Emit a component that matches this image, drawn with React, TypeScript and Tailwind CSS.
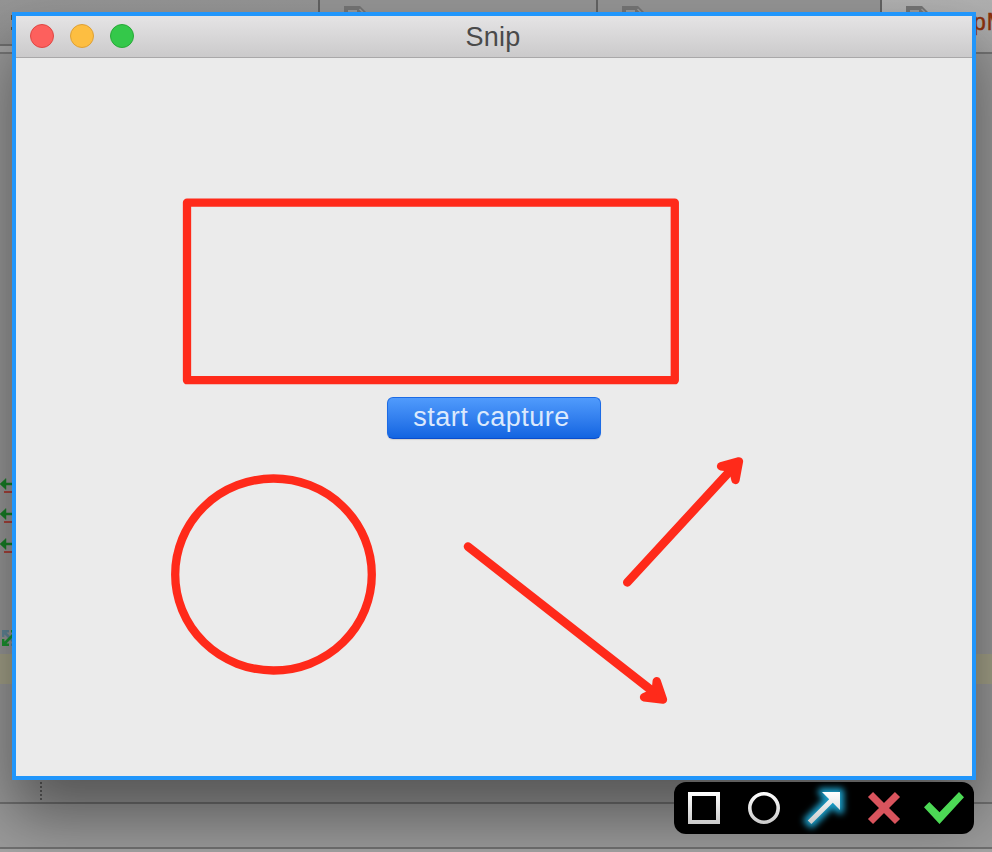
import React from "react";

function FileTab({ width, active = false, label }: { width: string; active?: boolean; label?: string }) {
  return (
    <div
      className={`relative flex h-full shrink-0 overflow-hidden border-l-2 border-[#626262] pl-6 ${width} ${
        active ? "bg-gradient-to-b from-[#b0b0b0] to-[#a5a5a5]" : ""
      }`}
    >
      <svg className="mt-1.5 shrink-0" width="24" height="28" viewBox="0 0 24 28" fill="none">
        <path d="M0 0H16L22 6V26H0Z" fill="#747474" />
        <path d="M4 4H13V9H4Z" fill="#999" />
        <path d="M15.5 3L20.5 8" stroke="#999" strokeWidth="1.5" />
      </svg>
      {label && (
        <span className="ml-[43px] mt-[9px] font-['Liberation_Sans',sans-serif] text-[23px] leading-[26px] tracking-[1px] text-[#8a300c] [-webkit-text-stroke:0.5px_#8a300c]">
          {label}
        </span>
      )}
    </div>
  );
}

function DiffMark() {
  return (
    <svg className="block h-[30px] w-4" viewBox="0 0 16 30">
      <path d="M0 8L6 2.5V7H16V9H6V13.5Z" fill="#178026" stroke="#178026" strokeWidth="0.5" />
      <rect x="4" y="15" width="12" height="2" fill="#a8443c" />
    </svg>
  );
}

function Desktop() {
  return (
    <div className="flex h-full flex-col bg-[#989898]">
      <div className="relative flex h-[54px] shrink-0">
        <div className="flex h-full w-[318px] shrink-0 flex-col">
          <div className="flex h-11 justify-between bg-gradient-to-b from-[#959595] to-[#909090]">
            <div className="ml-[11px] flex flex-col gap-[7px] pt-[15px]">
              <div className="h-[5px] w-1 bg-[#5d4d34]" />
              <div className="h-[3px] w-1 bg-[#5d4d34]" />
            </div>
          </div>
          <div className="h-0.5 bg-[#6e6e6e]" />
          <div className="h-1.5 bg-[#a2a2a2]" />
          <div className="h-0.5 bg-[#757575]" />
        </div>
        <div className="flex h-[52px] bg-[#949494]">
          <FileTab width="w-[278px]" />
          <FileTab width="w-[284px]" />
          <FileTab width="w-[112px]" active label="pM" />
        </div>
        <div className="absolute bottom-0 right-0 h-0.5 w-24 bg-[#737373]" />
      </div>
      <div className="h-[422px] shrink-0" />
      <DiffMark />
      <DiffMark />
      <DiffMark />
      <div className="h-[88px] shrink-0 pt-[64px]">
        <svg className="ml-0.5" width="16" height="16" viewBox="0 0 16 16" fill="none" strokeWidth="2.8">
          <path d="M1 7V1H7M1 1L15 15M9 15H15V9" stroke="#62889a" />
          <path d="M1 9V15H7M1 15L15 1M9 1H15V7" stroke="#1b9530" />
        </svg>
      </div>
      <div className="h-[30px] shrink-0 bg-[#a3a188]" />
      <div className="h-[118px] shrink-0 pl-10">
        <div className="h-[116px] w-0.5 bg-[repeating-linear-gradient(to_bottom,#5c5c5c_0px,#5c5c5c_2px,transparent_2px,transparent_4px)] bg-[position:0_2px]" />
      </div>
      <div className="h-0.5 shrink-0 bg-[#707070]" />
      <div className="h-[43px] shrink-0 bg-[#9b9b9b]" />
      <div className="h-0.5 shrink-0 bg-[#707070]" />
      <div className="flex-1 bg-[#a5a5a5]" />
    </div>
  );
}

function SnipWindow() {
  return (
    <div className="absolute left-3 top-3 flex h-[768px] w-[964px] flex-col border-4 border-[#2196fb] bg-[#ebebeb] shadow-[0_36px_60px_rgba(0,0,0,0.44)]">
      <div className="grid h-[42px] shrink-0 grid-cols-[1fr_auto_1fr] items-center border-b border-[#a9a8a9] bg-gradient-to-b from-[#e5e4e5] to-[#cbcacb]">
        <div className="flex gap-4 pb-0.5 pl-3.5">
          <div className="size-6 rounded-full border border-[#df4744] bg-[#fd605d]" />
          <div className="size-6 rounded-full border border-[#dea036] bg-[#fdbe41]" />
          <div className="size-6 rounded-full border border-[#28a937] bg-[#34c84a]" />
        </div>
        <div className="pr-0.5 pt-px font-['Liberation_Sans',sans-serif] text-[27px] leading-9 tracking-[0.2px] text-[#4a4a4a]">
          Snip
        </div>
      </div>
      <button className="ml-[371px] mt-[339px] h-[42px] w-[214px] shrink-0 rounded-md border border-[#1c6be5] border-b-[#0b4dcd] bg-gradient-to-b from-[#509bfc] to-[#1264e1] pb-0.5 pr-[5px] font-['Liberation_Sans',sans-serif] text-[27px] leading-[38px] tracking-[0.5px] text-[#dbe9fd] shadow-[0_1px_1px_rgba(0,0,0,0.12)]">
        start capture
      </button>
    </div>
  );
}

function Annotations() {
  return (
    <svg
      className="absolute inset-0"
      width="992"
      height="852"
      viewBox="0 0 992 852"
      fill="none"
      stroke="#ff2a1a"
      strokeWidth="8.3"
      strokeLinecap="round"
      strokeLinejoin="round"
    >
      <rect x="187" y="202.6" width="487.8" height="177.6" />
      <ellipse cx="273.5" cy="574.5" rx="98.3" ry="96" />
      <path d="M468 546.6L660 697" strokeWidth="8.6" />
      <path d="M656.7 681.2L663 699.6L644 697.3L652 693.4L656 688.5Z" fill="#ff2a1a" />
      <path d="M627.3 582.4L736 464.5" strokeWidth="8.6" />
      <path d="M721 466.3L739 461.3L735.5 480L733.5 471L729 467.3Z" fill="#ff2a1a" />
    </svg>
  );
}

function Tool({ children }: { children: React.ReactNode }) {
  return (
    <button className="flex h-[52px] w-[60px] items-center justify-center">
      <svg className="overflow-visible" width="40" height="32" viewBox="0 0 40 32" fill="none">
        {children}
      </svg>
    </button>
  );
}

function Toolbar() {
  return (
    <div className="absolute left-[674px] top-[782px] flex h-[52px] w-[300px] rounded-xl bg-black">
      <Tool>
        <defs>
          <linearGradient id="silver" gradientUnits="userSpaceOnUse" x1="0" y1="0" x2="0" y2="32">
            <stop stopColor="#fff" />
            <stop offset="1" stopColor="#cacaca" />
          </linearGradient>
        </defs>
        <rect x="6" y="2" width="28" height="28" stroke="url(#silver)" strokeWidth="4" />
      </Tool>
      <Tool>
        <circle cx="20" cy="16" r="14.2" stroke="url(#silver)" strokeWidth="3.6" />
      </Tool>
      <Tool>
        <path
          className="blur-[3px]"
          d="M18 0H36V18L28.8 10.8L7.4 32L3.8 28.4L25.2 7.2Z"
          fill="#1b9cc6"
          stroke="#1b9cc6"
          strokeWidth="8"
          strokeLinejoin="round"
        />
        <path d="M18 0H36V18L28.8 10.8L7.4 32L3.8 28.4L25.2 7.2Z" fill="url(#silver)" />
      </Tool>
      <Tool>
        <path d="M6.5 2.5L33.5 29.5M33.5 2.5L6.5 29.5" stroke="#d9545d" strokeWidth="7.2" />
      </Tool>
      <Tool>
        <path d="M0 15.3L5.3 10L15.5 20.2L35 0L40 5.3L15.5 32Z" fill="#4cd955" />
      </Tool>
    </div>
  );
}

export default function App() {
  return (
    <main className="relative h-[852px] w-[992px] overflow-hidden">
      <Desktop />
      <SnipWindow />
      <Annotations />
      <Toolbar />
    </main>
  );
}
